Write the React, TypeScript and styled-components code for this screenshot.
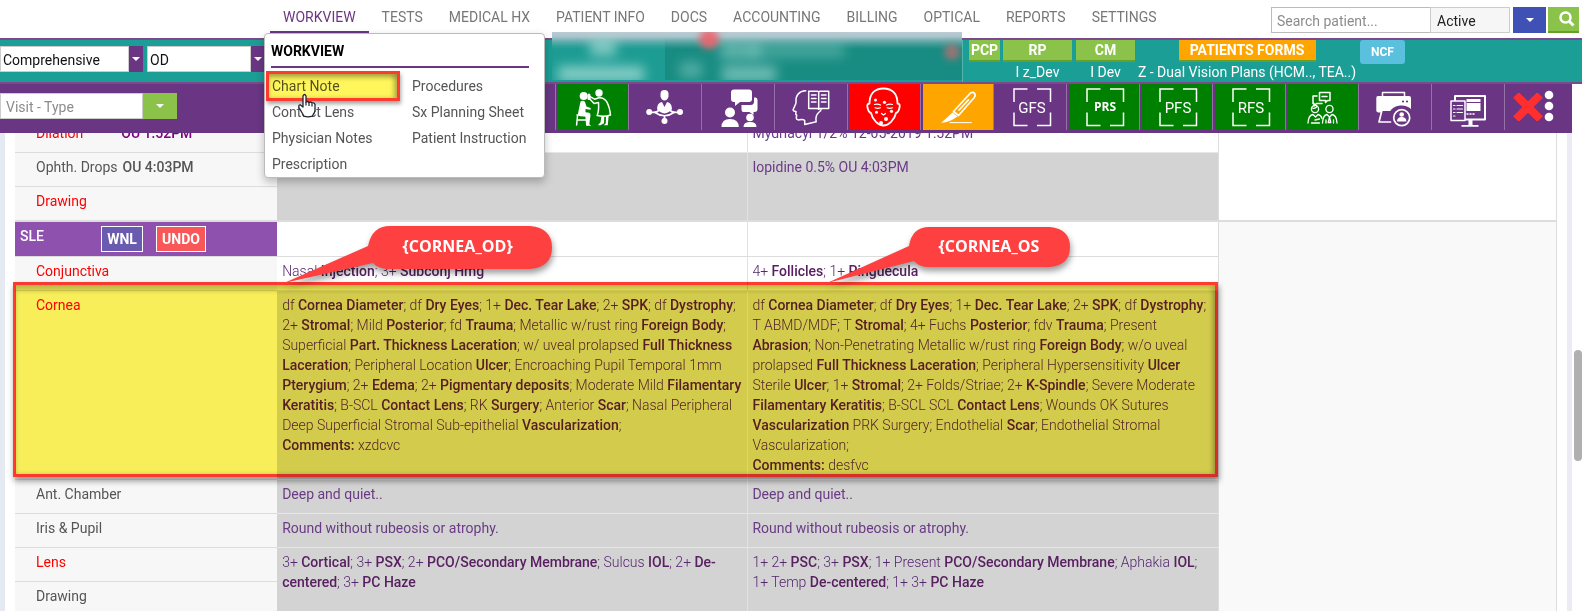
import React from "react";
import styled, { createGlobalStyle, css } from "styled-components";

const color = {
  purple: "#6a3684",
  purpleEdge: "#7c4a8c",
  teal: "#1b9e95",
  green: "#8bc34a",
  greenDark: "#689f2a",
  red: "#ff3b30",
};

const GlobalStyle = createGlobalStyle`
  * { box-sizing: border-box; }
  body { margin: 0; background: #fff; }
  body, button, input, select, table { font-family: Roboto, "Liberation Sans", sans-serif; font-size: 14px; }
  button { padding: 0; border: 0; cursor: pointer; }
`;

const Page = styled.div`
  height: 100vh;
  display: flex;
  flex-direction: column;
  overflow: hidden;
`;

/* ---------- top navigation ---------- */

const TopBar = styled.header`
  position: relative;
  z-index: 3;
  flex: none;
  display: flex;
  justify-content: space-between;
  height: 38px;
  padding: 0 3px 0 270px;
`;

const Nav = styled.nav`
  display: flex;
  align-items: flex-start;
`;

const NavItem = styled.div`
  position: relative;
`;

const NavLink = styled.a<{ $active?: boolean }>`
  display: block;
  height: 33px;
  padding: 1px 13px 0;
  line-height: 32px;
  color: ${(p) => (p.$active ? color.purple : "#777")};
  border-bottom: 2px solid ${(p) => (p.$active ? color.purple : "transparent")};
  text-decoration: none;
  white-space: nowrap;
`;

const Menu = styled.div`
  position: absolute;
  z-index: 10;
  top: 33px;
  left: -6px;
  width: 281px;
  height: 145px;
  padding: 0 15px 0 6px;
  background: #fff;
  border: 1px solid #bbb;
  border-radius: 4px;
  box-shadow: 0 4px 8px rgba(0, 0, 0, 0.25);
`;

const MenuTitle = styled.h2`
  margin: 0 0 4px;
  height: 34px;
  line-height: 34px;
  font-size: 14px;
  font-weight: 700;
  color: #000;
  border-bottom: 2px solid ${color.purple};
`;

const MenuGrid = styled.div`
  display: grid;
  grid-template-columns: 140px 1fr;
  grid-auto-rows: 26px;
`;

const MenuLink = styled.a`
  position: relative;
  padding-left: 1px;
  line-height: 28px;
  color: #555;
  text-decoration: none;
  white-space: nowrap;
`;

const marker = css`
  position: absolute;
  background: #fff65c;
  border: 3px solid ${color.red};
  mix-blend-mode: multiply;
  pointer-events: none;
`;

const MenuMarker = styled.span`
  ${marker}
  top: -1px;
  left: -5px;
  width: 134px;
  height: 30px;
  box-shadow: inset 0 4px 4px rgba(0, 0, 0, 0.25), inset -4px 0 4px rgba(0, 0, 0, 0.2), 1px 3px 4px rgba(0, 0, 0, 0.35);
`;

const Pointer = styled.svg`
  position: absolute;
  top: 21px;
  left: 27px;
  z-index: 2;
`;

const SearchForm = styled.form`
  display: flex;
  padding-top: 7px;
  height: 33px;
`;

const SearchInput = styled.input`
  width: 160px;
  padding: 1px 5px 0;
  border: 1px solid #bbb;
  border-radius: 0;
  color: #333;
  &::placeholder { color: #8c8c8c; }
`;

const StatusSelect = styled.select`
  appearance: none;
  width: 80px;
  margin-left: -1px;
  margin-right: 3px;
  padding: 1px 6px 0;
  border: 1px solid #ccc;
  border-radius: 0;
  background: #f6f6f6;
  color: #222;
`;

const SquareButton = styled.button<{ $bg: string; $w: number; $edge?: string }>`
  display: flex;
  align-items: center;
  justify-content: center;
  flex: none;
  width: ${(p) => p.$w}px;
  height: 26px;
  background: ${(p) => p.$bg};
  ${(p) => p.$edge && `border-bottom: 2px solid ${p.$edge};`}
`;

const SearchButton = styled(SquareButton)`
  margin-left: 2px;
  padding-left: 7px;
`;

const Caret = styled.span`
  border: 4px solid transparent;
  border-top-color: #fff;
  border-bottom: 0;
`;

/* ---------- patient bar ---------- */

const PatientBar = styled.section`
  position: relative;
  z-index: 2;
  flex: none;
  display: flex;
  height: 46px;
  background: ${color.teal};
  border-top: 2px solid ${color.purpleEdge};
  border-bottom: 2px solid ${color.purpleEdge};
`;

const Selects = styled.div`
  display: flex;
  flex: 0 0 552px;
  padding-top: 6px;
`;

const FlatSelect = styled.select<{ $w: number }>`
  appearance: none;
  width: ${(p) => p.$w}px;
  height: 26px;
  padding: 1px 2px 0;
  border: 1px solid #ccc;
  border-radius: 0;
  background: #fff;
  color: #111;
`;

const SelectArrow = styled(SquareButton)`
  margin-right: 4px;
`;

const Identity = styled.div`
  position: relative;
  flex: 0 1 410px;
`;

const Haze = styled.svg`
  position: absolute;
  top: -8px;
  left: 0;
  width: 100%;
  height: 48px;
`;

const Care = styled.div`
  display: flex;
  flex: 1;
  padding-left: 6px;
  border-left: 1px solid rgba(255, 255, 255, 0.25);
`;

const Role = styled.div<{ $w: number; $gap: number }>`
  display: flex;
  flex-direction: column;
  align-items: center;
  flex: none;
  width: ${(p) => p.$w}px;
  margin-right: ${(p) => p.$gap}px;
  color: #fff;
  white-space: nowrap;
  line-height: 20px;
`;

const RoleButton = styled.button<{ $bg?: string; $w?: number }>`
  width: ${(p) => (p.$w ? `${p.$w}px` : "100%")};
  height: 22px;
  flex: none;
  background: ${(p) => p.$bg ?? color.green};
  border-bottom: 2px solid ${color.greenDark};
  color: #fff;
  font-weight: 700;
`;

const NcfButton = styled.button`
  width: 45px;
  height: 24px;
  border-radius: 3px;
  background: #5bc0de;
  color: #fff;
  font-size: 12px;
  font-weight: 700;
`;

/* ---------- icon toolbar ---------- */

const Toolbar = styled.section`
  flex: none;
  display: flex;
  justify-content: space-between;
  height: 49px;
  margin-right: 10px;
  background: ${color.purple};
`;

const Visit = styled.div`
  display: flex;
  padding-top: 9px;
`;

const VisitInput = styled.input`
  width: 143px;
  height: 26px;
  padding: 1px 5px 0;
  border: 1px solid #ccc;
  border-radius: 0;
  &::placeholder { color: #8c8c8c; }
`;

const ToolList = styled.div`
  display: flex;
  height: 46px;
`;

const ToolCell = styled.div`
  flex: none;
  padding-left: 2px;
  border-left: 1px solid #9671a8;
`;

const ToolButton = styled.button<{ $bg?: string }>`
  display: block;
  width: 70px;
  height: 46px;
  background: ${(p) => p.$bg ?? "transparent"};
`;

const MoreTools = styled.div`
  display: flex;
  align-items: center;
  width: 68px;
  padding-left: 8px;
  border-left: 1px solid #9671a8;
`;

const PlainButton = styled.button`
  display: flex;
  background: none;
`;

/* ---------- exam table ---------- */

const Body = styled.main`
  flex: 1;
  min-height: 0;
  display: flex;
  overflow: hidden;
`;

const Sheet = styled.div`
  flex: 1;
  border-left: 5px solid #e4e9f2;
  border-right: 5px solid #ebebf3;
  padding: 0 10px;
  overflow: hidden;
`;

const TableWrap = styled.div`
  position: relative;
  margin-top: -15px;
`;

const Table = styled.table`
  width: 100%;
  table-layout: fixed;
  border-collapse: separate;
  border-spacing: 0;
  line-height: 20px;
`;

const Label = styled.th<{ $alert?: boolean }>`
  height: 34px;
  padding: 4px 0 4px 21px;
  text-align: left;
  vertical-align: top;
  font-weight: 400;
  background: #f7f7f7;
  border-top: 1px solid #ddd;
  color: ${(p) => (p.$alert ? "#f00" : "#555")};
`;

const SectionLabel = styled.th`
  height: 36px;
  padding: 0 5px;
  text-align: left;
  background: #8e52ae;
  border-top: 2px solid #ddd;
  color: #fff;
  font-weight: 500;
`;

const SectionHead = styled.div`
  display: flex;
  align-items: center;
  height: 34px;
`;

const SectionName = styled.span`
  width: 81px;
  padding-bottom: 6px;
`;

const TagButton = styled.button<{ $bg: string; $w: number }>`
  width: ${(p) => p.$w}px;
  height: 26px;
  margin-right: 13px;
  border: 1px solid #fff;
  background: ${(p) => p.$bg};
  color: #fff;
  font-weight: 700;
`;

const Value = styled.td<{ $white?: boolean; $thick?: boolean }>`
  padding: 4px 4px 4px 5px;
  vertical-align: top;
  background: ${(p) => (p.$white ? "#fff" : "#d3d3d3")};
  border-top: ${(p) => (p.$thick ? "2px solid #ddd" : p.$white ? "1px solid #ddd" : "1px solid #e6e6e6")};
  & + & { padding-left: 4px; border-left: 1px solid #e2e2e2; }
  color: #6a3a86;
`;

const Findings = styled.div`
  font-weight: 300;
  color: #55256f;
  b { font-weight: 500; color: #582060; }
`;

const Blank = styled.td<{ $shade?: boolean }>`
  border: 1px solid #ddd;
  border-top-width: ${(p) => (p.$shade ? "2px" : "0")};
  border-bottom: 0;
  background: ${(p) => (p.$shade ? "#f9f9f9" : "#fff")};
`;

const Time = styled.b<{ $c: string }>`
  margin-left: 5px;
  font-weight: 500;
  color: ${(p) => p.$c};
`;

const DilutionTime = styled(Time)`
  margin-left: 38px;
`;

const RowMarker = styled.div`
  ${marker}
  top: 164px;
  left: -2px;
  right: 22%;
  height: 195px;
  box-shadow: inset 0 6px 4px rgba(0, 0, 0, 0.18), inset -3px 0 4px rgba(0, 0, 0, 0.18), 1px 4px 6px rgba(0, 0, 0, 0.4);
`;

const Callout = styled.div<{ $left: string; $w: number }>`
  position: absolute;
  top: 108px;
  left: ${(p) => p.$left};
  width: ${(p) => p.$w}px;
  height: 60px;
  padding: 9px 0 0 78px;
  text-align: center;
  font-family: "Open Sans", sans-serif;
  font-size: 16px;
  font-weight: 700;
  line-height: 22px;
  color: #fff;
`;

const CalloutShape = styled.svg`
  position: absolute;
  top: 0;
  left: 0;
  overflow: visible;
  filter: drop-shadow(1px 4px 3px rgba(0, 0, 0, 0.4));
`;

const CalloutText = styled.span`
  position: relative;
`;

const ScrollTrack = styled.div`
  flex: none;
  width: 10px;
  padding: 217px 0 0 2px;
`;

const ScrollThumb = styled.div`
  height: 111px;
  border-radius: 4px;
  background: #b0b0b0;
`;

/* ---------- drawings ---------- */

function Icon({ children }: { children: React.ReactNode }) {
  return (
    <svg width="70" height="46" viewBox="0 0 70 46" fill="none" stroke="#fff" strokeWidth="1.5" strokeLinecap="round" strokeLinejoin="round" aria-hidden="true">
      {children}
    </svg>
  );
}

const Exam = () => (
  <Icon>
    <g fill="#fff" stroke="none">
      <circle cx="25.7" cy="12" r="4" />
      <circle cx="41" cy="9" r="3.7" />
      <path d="M22.5 17.5 q3-1.5 4.5 .5 l1.5 4.5 4 1.5 q.8 1-.2 1.8 l-4.8-.8 v3.2 l3.6.6 q1.6.6 1.4 2.4 l-1.2 9 2 1.6 h-4.6 l.4-9 -7-.6 q-2.4-.6-2-3.2z" />
      <path d="M43.5 32 l2.8 0 -.3 7.3 -3.5 2 h-2.6 l2.6-3z" />
      <path d="M48 32 h2.6 l-.8 9.2 h-4 l2-2z" />
    </g>
    <path d="M19 31 h10 M19.6 31 L18.6 41 M28 31 L28.8 41 M19.4 36 h8.8" />
    <path d="M32 12.6 l4.6 2.6 4.4-1.4 q4.5-.4 7.5 3.6 q3 5 4 13.6 q-6 2.4-13.4 .6 q2-4.6 1.4-13 l-4.4 .8 -5.2-5.4" />
    <path d="M31 11 v3.4" strokeWidth="3" />
  </Icon>
);

const Network = () => (
  <Icon>
    <path d="M18 28 q8 1 9.5-1.5 M49 28 q-8 1-9.5-1.5 M24 28.5 q9.500 6.500 19 0 M33.5 32 v5" strokeWidth="1.7" />
    <g fill="#fff" stroke="none">
      <path d="M29.5 10 q0-4 4-4 t4 4 v2.500 q-1 4-4 4 t-4-4z" />
      <path d="M26 25 q0-6 5-7 l2.5 5 2.5-5 q5 1 5 7 q-3.500 4.400-7.500 4.400 t-7.500-4.400z" />
      <circle cx="18.200" cy="28" r="3" />
      <circle cx="49" cy="28" r="3" />
      <circle cx="33.500" cy="37" r="3" />
    </g>
  </Icon>
);

const Discuss = () => (
  <Icon>
    <g fill="#fff" stroke="none">
      <path d="M30 5.500 h15 q3 0 3 3 v6.500 q0 3-3 3 h-9 l-5 4 v-4 h-1 q-3 0-3-3 v-6.500 q0-3 3-3z" />
      <path d="M50 13.500 h1.500 q2 0 2 2.500 v9 q0 3-3 3 h-1 v3 l-4-3 h-6 q-2 0-2-2.500 v-4.500 h9 q3.500 0 3.500-3.500z" />
      <circle cx="26" cy="28.500" r="5" />
      <path d="M17.500 43 q0-8 8.500-8 t8.800 8z" />
      <circle cx="46" cy="33.500" r="3.800" />
      <path d="M39.500 43 q0-5 6.500-5 t6.500 5z" />
    </g>
  </Icon>
);

const Learn = () => (
  <Icon>
    <path d="M28.700 6.700 C22 7 18.500 11.500 19 17.500 q.3 1.500-.7 3.300 L16 26 q.6 1.400 3 1.600 l-.3 2.400 1 1.500 q-1.600 5 3 4.300 3.600-.6 5 .7 v4 l11.500-2.700 q-1.200-6.600 3-9.800 1.800-1.200 1.800-2.500" />
    <path d="M31.700 7.200 h8.800 l1.200.8 1.200-.8 h8.800 v17.300 h-8.800 l-1.200.8 -1.200-.8 h-8.800z M41.700 8 v17 M34.500 11 h4.500 M34.500 14.500 h4.500 M34.500 18 h4.500 M44.500 11 h4.500 M44.500 14.500 h4.500 M44.500 18 h4.500" />
  </Icon>
);

const Face = () => (
  <Icon>
    <path d="M33.500 4.500 C24.500 4.500 19.500 10 19.500 19.500 q-3 .2-2 4 1 5 3.500 5.500 C22.500 36 28.500 41.500 33.500 41.500 S44.500 36 46 29 q2.500-.5 3.500-5.500 1-3.800-2-4 C47.500 10 42.500 4.500 33.500 4.500z" strokeWidth="1.800" />
    <path d="M24.500 20.500 q3-1 6 .5 M36.500 21 q3-1.500 6-.5 M25 23.800 q2.500 1 5.500 0 M37 23.800 q3 1 5.500 0 M31.500 29.500 l2 1.500 2-1.500" strokeWidth="1.200" />
    <g fill="#fff" stroke="none">
      <circle cx="25.500" cy="16" r="1.500" />
      <circle cx="34.500" cy="18.300" r="1.600" />
      <circle cx="41.500" cy="27.300" r="1.600" />
      <circle cx="26.500" cy="28.300" r="1.500" />
      <circle cx="36" cy="35" r="2" />
      <circle cx="31" cy="39" r="2" />
    </g>
  </Icon>
);

const Scalpel = () => (
  <Icon>
    <path d="M30.500 27.500 L47.500 9 q2.600-1.500 4 .2 t-.2 4.300 L35.500 31.500z M36 26 L45.500 15.800" strokeWidth="1.700" />
    <path d="M29.500 28.500 L34.500 32.500 29 36 q-5 2.400-11 3z" fill="#fff" stroke="none" />
    <path d="M27 38.600 H48.500" strokeWidth="1" />
  </Icon>
);

function Framed({ text, bold }: { text: string; bold?: boolean }) {
  return (
    <Icon>
      <path d="M18 18 V5 H31.500 M41 5 H54.500 V18 M54.500 28.500 V41.500 H41 M31.500 41.500 H18 V28.500" strokeLinecap="butt" strokeLinejoin="miter" />
      <text x="36" y={bold ? 27 : 28.500} textAnchor="middle" fill="#fff" stroke="none" fontFamily={bold ? "Open Sans" : "Roboto"} fontSize={bold ? 12 : 15} fontWeight={bold ? 700 : 400}>
        {text}
      </text>
    </Icon>
  );
}

const Consult = () => (
  <Icon>
    <path d="M31.500 8.500 h10.500 v8 h-2.500 l-2 2 v-2 h-6z M29 12 h-4 v7.500 h1 v2.500 l2.500-2.500 h5.500 M34 12.500 h5" />
    <g strokeWidth="1.300">
      <circle cx="27" cy="25" r="3.600" />
      <path d="M24 24 q3 1 5-1.500" />
      <circle cx="41.500" cy="25" r="3.600" />
      <path d="M20 39 q.5-8 5-8.500 l2.500 2.500 2.500-2.500 q3 .5 4 4 M23.500 39 h8 M27 36 l4.500-1" />
      <path d="M34.500 39 q.5-8 4.500-8.500 l2.500 2.500 2.500-2.500 q4.500 .5 5 8.500 M38 39 v-3 M45.500 39 v-3 M41.500 33 l-1.300 5.500 h2.600z" />
    </g>
  </Icon>
);

const Printer = () => (
  <Icon>
    <path d="M21.500 12 v-3.500 h22 v3.500" />
    <path d="M17 12 h31 q2 0 2 2 v11 q-4-4-11-3.500 -8 1-10.500 7 h-11 q-2.200 0-2.200-2 v-12.500 q0-2 1.700-2z" fill="#fff" stroke="none" />
    <circle cx="42" cy="17.500" r="1.100" fill={color.purple} stroke="none" />
    <circle cx="46" cy="17.500" r="1.100" fill={color.purple} stroke="none" />
    <path d="M21 27 h9 l-1 11 H18z" fill={color.purple} stroke="none" />
    <path d="M21 26 L18 38 h11.500" strokeWidth="1.700" />
    <circle cx="40.700" cy="33.700" r="8" fill={color.purple} strokeWidth="1.700" />
    <circle cx="40.700" cy="30.500" r="2.300" fill="#fff" stroke="none" />
    <path d="M36 37.500 q0-4.500 4.700-4.500 t4.700 4.500z" fill="#fff" stroke="none" />
  </Icon>
);

const Monitor = () => (
  <Icon>
    <path d="M21 12 H51 V35.500 H21z" strokeWidth="2" />
    <path d="M32.500 15 h14 v12 h-14z" fill="#fff" stroke="none" />
    <path d="M33 18.500 h13.500" stroke={color.purple} strokeWidth="1" />
    <path d="M33 30 h1 M36 30 h1 M39 30 h1" />
    <path d="M34.500 36 h4 v5 h6 v1.800 h-17 v-1.800 h7z" fill="#fff" stroke="none" />
    <path d="M17 17 h14 v19.500 h-14z" fill={color.purple} />
    <path d="M19.500 21.500 h1.500 M23 21.500 h5.500 M19.500 25 h1.500 M23 25 h5.500 M19.500 28.500 h1.500 M23 28.500 h5.500 M19.500 32 h1.500" strokeWidth="1.200" />
  </Icon>
);

function Hand() {
  return (
    <Pointer width="19" height="25" viewBox="0 0 19 25" aria-hidden="true">
      <path
        d="M5 3 q1.500-3 3 0 v6 q1.500-1.200 3 .5 1.600-1.200 3 .5 2.200-.8 3 1.500 v6 q-.3 2-1.500 3.500 l-1.200 2.200 q-4.500 1.500-8.300 0 L1 14.500 q-.8-2.800 1.500-2.500 L5 14z"
        fill="#fff" stroke="#1c2430" strokeWidth="1.300" strokeLinejoin="round"
      />
      <path d="M8 9 v3.500 M11 9.600 v3.400 M14 10.500 v3" stroke="#1c2430" strokeWidth="1.200" />
    </Pointer>
  );
}

const tools: { name: string; bg?: string; icon: React.ReactNode }[] = [
  { name: "Examination", bg: "#008000", icon: <Exam /> },
  { name: "Referral network", icon: <Network /> },
  { name: "Discussion", icon: <Discuss /> },
  { name: "Education", icon: <Learn /> },
  { name: "Face", bg: "#ff0000", icon: <Face /> },
  { name: "Surgery", bg: "#ffa500", icon: <Scalpel /> },
  { name: "GFS", icon: <Framed text="GFS" /> },
  { name: "PRS", bg: "#008000", icon: <Framed text="PRS" bold /> },
  { name: "PFS", bg: "#008000", icon: <Framed text="PFS" /> },
  { name: "RFS", bg: "#008000", icon: <Framed text="RFS" /> },
  { name: "Consult", bg: "#008000", icon: <Consult /> },
  { name: "Print", icon: <Printer /> },
  { name: "Screens", icon: <Monitor /> },
];

const navItems = ["TESTS", "MEDICAL HX", "PATIENT INFO", "DOCS", "ACCOUNTING", "BILLING", "OPTICAL", "REPORTS", "SETTINGS"];

/* Findings are written with **strong** terms between double asterisks. */
function Finding({ text, comment }: { text: string; comment?: string }) {
  return (
    <Findings>
      {text.split("**").map((part, i) => (i % 2 ? <b key={i}>{part}</b> : part))}
      {comment && <><br /><b>Comments:</b> {comment}</>}
    </Findings>
  );
}

const corneaOD =
  "df **Cornea Diameter**; df **Dry Eyes**; 1+ **Dec. Tear Lake**; 2+ **SPK**; df **Dystrophy**; 2+ **Stromal**; Mild **Posterior**; fd **Trauma**; Metallic w/rust ring **Foreign Body**; Superficial **Part. Thickness Laceration**; w/ uveal prolapsed **Full Thickness Laceration**; Peripheral Location **Ulcer**; Encroaching Pupil Temporal 1mm **Pterygium**; 2+ **Edema**; 2+ **Pigmentary deposits**; Moderate Mild **Filamentary Keratitis**; B-SCL **Contact Lens**; RK **Surgery**; Anterior **Scar**; Nasal Peripheral Deep Superficial Stromal Sub-epithelial **Vascularization**;";
const corneaOS =
  "df **Cornea Diameter**; df **Dry Eyes**; 1+ **Dec. Tear Lake**; 2+ **SPK**; df **Dystrophy**; T ABMD/MDF; T **Stromal**; 4+ Fuchs **Posterior**; fdv **Trauma**; Present **Abrasion**; Non-Penetrating Metallic w/rust ring **Foreign Body**; w/o uveal prolapsed **Full Thickness Laceration**; Peripheral Hypersensitivity **Ulcer** Sterile **Ulcer**; 1+ **Stromal**; 2+ Folds/Striae; 2+ **K-Spindle**; Severe Moderate **Filamentary Keratitis**; B-SCL SCL **Contact Lens**; Wounds OK Sutures **Vascularization** PRK Surgery; Endothelial **Scar**; Endothelial Stromal Vascularization;";

export default function App() {
  return (
    <Page>
      <GlobalStyle />
      <TopBar>
        <Nav>
          <NavItem>
            <NavLink href="#workview" $active>WORKVIEW</NavLink>
            <Menu>
              <MenuTitle>WORKVIEW</MenuTitle>
              <MenuGrid>
                <MenuLink href="#chart-note">Chart Note<MenuMarker /><Hand /></MenuLink>
                <MenuLink href="#procedures">Procedures</MenuLink>
                <MenuLink href="#contact-lens">Contact Lens</MenuLink>
                <MenuLink href="#planning">Sx Planning Sheet</MenuLink>
                <MenuLink href="#physician">Physician Notes</MenuLink>
                <MenuLink href="#instruction">Patient Instruction</MenuLink>
                <MenuLink href="#prescription">Prescription</MenuLink>
              </MenuGrid>
            </Menu>
          </NavItem>
          {navItems.map((n) => (
            <NavLink key={n} href={`#${n.toLowerCase().replace(" ", "-")}`}>{n}</NavLink>
          ))}
        </Nav>
        <SearchForm>
          <SearchInput aria-label="Search patient" placeholder="Search patient..." />
          <StatusSelect aria-label="Patient status"><option>Active</option></StatusSelect>
          <SquareButton type="button" $bg="#3f51b5" $w={33} aria-label="Status options"><Caret /></SquareButton>
          <SearchButton type="button" $bg={color.green} $edge={color.greenDark} $w={31} aria-label="Search">
            <svg width="16" height="16" viewBox="0 0 16 16" fill="none" stroke="#fff" strokeWidth="2.500">
              <circle cx="6.500" cy="6.500" r="5" />
              <path d="M10.200 10.200 L14.500 14.500" strokeWidth="3" />
            </svg>
          </SearchButton>
        </SearchForm>
      </TopBar>

      <PatientBar>
        <Selects>
          <FlatSelect aria-label="Exam type" $w={129}><option>Comprehensive</option></FlatSelect>
          <SelectArrow type="button" $bg={color.purple} $w={14} aria-label="Exam type options"><Caret /></SelectArrow>
          <FlatSelect aria-label="Provider" $w={104}><option>OD</option></FlatSelect>
          <SelectArrow type="button" $bg={color.purple} $w={14} aria-label="Provider options"><Caret /></SelectArrow>
        </Selects>
        <Identity>
          <Haze viewBox="0 0 410 48" preserveAspectRatio="none" aria-hidden="true">
            <defs>
              <linearGradient id="top" x1="0" x2="0" y1="0" y2="1">
                <stop offset="0" stopColor="#bccbd4" />
                <stop offset="0.100" stopColor="#a9c4cb" />
                <stop offset="0.360" stopColor="#5fa9a8" stopOpacity="0" />
              </linearGradient>
              <filter id="soft" x="-100%" y="-150%" width="300%" height="400%"><feGaussianBlur stdDeviation="6" /></filter>
              <filter id="spot" x="-100%" y="-100%" width="300%" height="300%"><feGaussianBlur stdDeviation="3.500" /></filter>
              <clipPath id="edge"><rect width="410" height="48" /></clipPath>
            </defs>
            <g clipPath="url(#edge)">
              <rect width="410" height="48" fill="#1c9c93" />
              <rect x="113" width="297" height="48" fill="#188c82" />
              <rect width="410" height="48" fill="url(#top)" />
              <g filter="url(#soft)" fill="#a5dcd5">
                <rect x="38" y="6" width="26" height="18" opacity="0.700" />
                <rect x="6" y="34" width="86" height="16" opacity="0.750" />
                <rect x="128" y="30" width="22" height="16" opacity="0.400" />
                <rect x="168" y="10" width="40" height="17" opacity="0.500" />
                <rect x="200" y="12" width="92" height="13" opacity="0.350" />
                <rect x="170" y="34" width="54" height="16" opacity="0.600" />
              </g>
              <g filter="url(#spot)" fill="#f0626c">
                <circle cx="157" cy="7" r="10" opacity="0.900" />
                <circle cx="400" cy="20" r="8" opacity="0.600" />
              </g>
            </g>
          </Haze>
        </Identity>
        <Care>
          <Role $w={31} $gap={3}><RoleButton type="button">PCP</RoleButton></Role>
          <Role $w={69} $gap={4}><RoleButton type="button">RP</RoleButton>I z_Dev</Role>
          <Role $w={59} $gap={3}><RoleButton type="button">CM</RoleButton>I Dev</Role>
          <Role $w={218} $gap={4}><RoleButton type="button" $bg="#ffa500" $w={137}>PATIENTS FORMS</RoleButton>Z - Dual Vision Plans (HCM.., TEA..)</Role>
          <NcfButton type="button">NCF</NcfButton>
        </Care>
      </PatientBar>

      <Toolbar>
        <Visit>
          <VisitInput aria-label="Visit type" placeholder="Visit - Type" />
          <SquareButton type="button" $bg={color.green} $w={34} aria-label="Visit type options"><Caret /></SquareButton>
        </Visit>
        <ToolList>
          {tools.map((t) => (
            <ToolCell key={t.name}>
              <ToolButton type="button" $bg={t.bg} aria-label={t.name}>{t.icon}</ToolButton>
            </ToolCell>
          ))}
          <MoreTools>
            <PlainButton type="button" aria-label="Close">
              <svg width="30" height="28" viewBox="0 0 30 28" stroke="#ff2f2f" strokeWidth="8">
                <path d="M3 2 L27 26 M27 2 L3 26" />
              </svg>
            </PlainButton>
            <PlainButton type="button" aria-label="More">
              <svg width="12" height="34" viewBox="0 0 12 34" fill="#fff">
                <circle cx="6" cy="5" r="4.300" />
                <circle cx="6" cy="16" r="4.300" />
                <circle cx="6" cy="27" r="4.300" />
              </svg>
            </PlainButton>
          </MoreTools>
        </ToolList>
      </Toolbar>

      <Body>
        <Sheet>
          <TableWrap>
            <Table>
              <colgroup>
                <col style={{ width: "17%" }} />
                <col style={{ width: "30.5%" }} />
                <col style={{ width: "30.5%" }} />
                <col style={{ width: "22%" }} />
              </colgroup>
              <tbody>
                <tr>
                  <Label scope="row" $alert>Dilation<DilutionTime $c="#800080">OU 1:52PM</DilutionTime></Label>
                  <Value $white />
                  <Value $white>Mydriacyl 1/2% 12-05-2019 1:52PM</Value>
                  <Blank rowSpan={3} />
                </tr>
                <tr>
                  <Label scope="row">Ophth. Drops<Time $c="#555">OU 4:03PM</Time></Label>
                  <Value rowSpan={2} />
                  <Value rowSpan={2}>Iopidine 0.5% OU 4:03PM</Value>
                </tr>
                <tr><Label scope="row" $alert>Drawing</Label></tr>
                <tr>
                  <SectionLabel scope="row">
                    <SectionHead>
                      <SectionName>SLE</SectionName>
                      <TagButton type="button" $bg="#6a5bb0" $w={42}>WNL</TagButton>
                      <TagButton type="button" $bg="#fa5858" $w={50}>UNDO</TagButton>
                    </SectionHead>
                  </SectionLabel>
                  <Value $white $thick />
                  <Value $white $thick />
                  <Blank $shade rowSpan={7} />
                </tr>
                <tr>
                  <Label scope="row" $alert>Conjunctiva</Label>
                  <Value $white><Finding text="Nasal **Injection**; 3+ **Subconj Hmg**" /></Value>
                  <Value $white><Finding text="4+ **Follicles**; 1+ **Pinguecula**" /></Value>
                </tr>
                <tr>
                  <Label scope="row" $alert>Cornea</Label>
                  <Value><Finding text={corneaOD} comment="xzdcvc" /></Value>
                  <Value><Finding text={corneaOS} comment="desfvc" /></Value>
                </tr>
                <tr>
                  <Label scope="row">Ant. Chamber</Label>
                  <Value>Deep and quiet..</Value>
                  <Value>Deep and quiet..</Value>
                </tr>
                <tr>
                  <Label scope="row">Iris &amp; Pupil</Label>
                  <Value>Round without rubeosis or atrophy.</Value>
                  <Value>Round without rubeosis or atrophy.</Value>
                </tr>
                <tr>
                  <Label scope="row" $alert>Lens</Label>
                  <Value rowSpan={2}><Finding text="3+ **Cortical**; 3+ **PSX**; 2+ **PCO/Secondary Membrane**; Sulcus **IOL**; 2+ **De-centered**; 3+ **PC Haze**" /></Value>
                  <Value rowSpan={2}><Finding text="1+ 2+ **PSC**; 3+ **PSX**; 1+ Present **PCO/Secondary Membrane**; Aphakia **IOL**; 1+ Temp **De-centered**; 1+ 3+ **PC Haze**" /></Value>
                </tr>
                <tr><Label scope="row">Drawing</Label></tr>
              </tbody>
            </Table>
            <RowMarker />
            <Callout $left="calc(17% + 8px)" $w={267}>
              <CalloutShape width="267" height="60" viewBox="0 0 267 60">
                <path d="M-1 57 L83 20 Q87 0 105 0 H245 Q267 2 267 21.500 T245 43 H105 Q93 43 88 37z" fill="#ff4040" />
              </CalloutShape>
              <CalloutText>{"{CORNEA_OD}"}</CalloutText>
            </Callout>
            <Callout $left="calc(47.5% + 82px)" $w={241}>
              <CalloutShape width="241" height="60" viewBox="0 0 241 60">
                <path d="M-2 57 L80 20 Q83 1 100 1 H221 Q241 3 241 21 T221 41 H100 Q90 41 85 35z" fill="#ff4040" />
              </CalloutShape>
              <CalloutText>{"{CORNEA_OS"}</CalloutText>
            </Callout>
          </TableWrap>
        </Sheet>
        <ScrollTrack><ScrollThumb /></ScrollTrack>
      </Body>
    </Page>
  );
}
